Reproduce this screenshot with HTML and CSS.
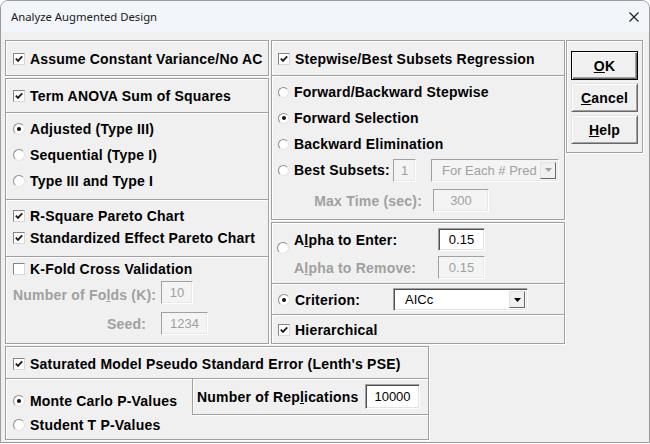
FILE: index.html
```html
<!DOCTYPE html>
<html lang="en">
<head>
    <meta charset="UTF-8">
    <title>Analyze Augmented Design</title>
    <link rel="stylesheet" href="styles.css">
</head>
<body>
    <div class="window">
        <div class="titlebar">
            <span class="title">Analyze Augmented Design</span>
            <svg class="close" width="10" height="10" viewBox="0 0 10 10">
                <path d="M0.5 0.5 L9.5 9.5 M9.5 0.5 L0.5 9.5" stroke="#1a1a1a" stroke-width="1.1" fill="none"/>
            </svg>
        </div>

        <div class="client">
            <div class="top">
                <!-- left column -->
                <div class="col-left">
                    <div class="panel p-assume">
                        <div class="row">
                            <span class="cb on"><svg viewBox="0 0 10 10"><path d="M1.8 4.6 L4 6.9 L8.2 2.4"/></svg></span>
                            <span class="lbl">Assume Constant Variance/No AC</span>
                        </div>
                    </div>

                    <div class="panel p-anova">
                        <div class="sec s-head">
                            <div class="row">
                                <span class="cb on"><svg viewBox="0 0 10 10"><path d="M1.8 4.6 L4 6.9 L8.2 2.4"/></svg></span>
                                <span class="lbl">Term ANOVA Sum of Squares</span>
                            </div>
                        </div>
                        <div class="sec s-types">
                            <div class="row r26"><span class="rb on"></span><span class="lbl">Adjusted (Type III)</span></div>
                            <div class="row r26"><span class="rb"></span><span class="lbl">Sequential (Type I)</span></div>
                            <div class="row r26"><span class="rb"></span><span class="lbl">Type III and Type I</span></div>
                        </div>
                        <div class="sec s-pareto">
                            <div class="row r22">
                                <span class="cb on"><svg viewBox="0 0 10 10"><path d="M1.8 4.6 L4 6.9 L8.2 2.4"/></svg></span>
                                <span class="lbl">R-Square Pareto Chart</span>
                            </div>
                            <div class="row r22">
                                <span class="cb on"><svg viewBox="0 0 10 10"><path d="M1.8 4.6 L4 6.9 L8.2 2.4"/></svg></span>
                                <span class="lbl">Standardized Effect Pareto Chart</span>
                            </div>
                        </div>
                        <div class="sec s-kfold">
                            <div class="row r22">
                                <span class="cb"></span>
                                <span class="lbl">K-Fold Cross Validation</span>
                            </div>
                            <div class="row r-folds">
                                <span class="lbl off lbl-folds">Number of Fo<u>l</u>ds (K):</span>
                                <span class="field off w-folds">10</span>
                            </div>
                            <div class="row r-seed">
                                <span class="lbl off lbl-seed">Seed:</span>
                                <span class="field off w-seed">1234</span>
                            </div>
                        </div>
                    </div>
                </div>

                <!-- middle column -->
                <div class="col-mid">
                    <div class="panel p-step">
                        <div class="sec s-stephead">
                            <div class="row">
                                <span class="cb on"><svg viewBox="0 0 10 10"><path d="M1.8 4.6 L4 6.9 L8.2 2.4"/></svg></span>
                                <span class="lbl">Stepwise/Best Subsets Regression</span>
                            </div>
                        </div>
                        <div class="sec s-method">
                            <div class="row r26"><span class="rb"></span><span class="lbl">Forward/Backward Stepwise</span></div>
                            <div class="row r26"><span class="rb on"></span><span class="lbl">Forward Selection</span></div>
                            <div class="row r26"><span class="rb"></span><span class="lbl">Backward Elimination</span></div>
                            <div class="row r26">
                                <span class="rb"></span><span class="lbl lbl-best">Best Subsets:</span>
                                <span class="field off w-best">1</span>
                                <span class="select off w-foreach">
                                    <span class="val">For Each # Pred</span>
                                    <span class="drop"><svg width="7" height="4" viewBox="0 0 7 4"><path d="M0 0 H7 L3.5 4 Z"/></svg></span>
                                </span>
                            </div>
                            <div class="row r-maxtime">
                                <span class="lbl off lbl-maxtime">Max Time (sec):</span>
                                <span class="field off w-maxtime">300</span>
                            </div>
                        </div>
                    </div>

                    <div class="panel p-alpha">
                        <div class="sec s-alpha">
                            <span class="rb rb-alpha"></span>
                            <div class="alpha-rows">
                                <div class="row r-alpha">
                                    <span class="lbl lbl-alpha">A<u>l</u>pha to Enter:</span>
                                    <span class="field w-alpha">0.15</span>
                                </div>
                                <div class="row r-alpha r-remove">
                                    <span class="lbl off lbl-alpha">A<u>l</u>pha to Remove:</span>
                                    <span class="field off w-alpha">0.15</span>
                                </div>
                            </div>
                        </div>
                        <div class="sec s-crit">
                            <div class="row">
                                <span class="rb on"></span><span class="lbl lbl-crit">Criterion:</span>
                                <span class="select w-crit">
                                    <span class="val">AICc</span>
                                    <span class="drop"><svg width="7" height="4" viewBox="0 0 7 4"><path d="M0 0 H7 L3.5 4 Z"/></svg></span>
                                </span>
                            </div>
                        </div>
                        <div class="sec s-hier">
                            <div class="row">
                                <span class="cb on"><svg viewBox="0 0 10 10"><path d="M1.8 4.6 L4 6.9 L8.2 2.4"/></svg></span>
                                <span class="lbl">Hierarchical</span>
                            </div>
                        </div>
                    </div>
                </div>

                <!-- buttons -->
                <div class="panel p-buttons">
                    <div class="btn default"><u>O</u>K</div>
                    <div class="btn"><u>C</u>ancel</div>
                    <div class="btn"><u>H</u>elp</div>
                </div>
            </div>

            <div class="panel p-pse">
                <div class="sec s-psehead">
                    <div class="row">
                        <span class="cb on"><svg viewBox="0 0 10 10"><path d="M1.8 4.6 L4 6.9 L8.2 2.4"/></svg></span>
                        <span class="lbl">Saturated Model Pseudo Standard Error (Lenth's PSE)</span>
                    </div>
                </div>
                <div class="sec s-pvalues">
                    <div class="pv-radios">
                        <div class="row r24"><span class="rb on"></span><span class="lbl">Monte Carlo P-Values</span></div>
                        <div class="row r24"><span class="rb"></span><span class="lbl">Student T P-Values</span></div>
                    </div>
                    <div class="reps">
                        <span class="lbl">Number of Rep<u>l</u>ications</span>
                        <span class="field w-reps">10000</span>
                    </div>
                </div>
            </div>
        </div>
    </div>
</body>
</html>
```

FILE: styles.css
```css
* {
    box-sizing: border-box;
}

body {
    margin: 0;
    background: #ffffff;
    font-family: "Liberation Sans", Arial, sans-serif;
}

.window {
    width: 650px;
    height: 443px;
    border: 1px solid #9c9c9c;
    border-radius: 8px 8px 0 0;
    background: #f0f0f0;
    overflow: hidden;
}

.titlebar {
    height: 31px;
    background: #f2f5f9;
    display: flex;
    align-items: center;
    justify-content: space-between;
    padding: 0 10px 0 10px;
}

.title {
    font-family: "Noto Sans", "Open Sans", sans-serif;
    font-size: 11.3px;
    color: #1a1a1a;
}

.client {
    padding: 8px 0 0 4px;
}

.top {
    display: flex;
    align-items: flex-start;
}

.col-left {
    width: 264px;
    display: flex;
    flex-direction: column;
    gap: 2px;
}

.col-mid {
    width: 294px;
    margin-left: 2px;
    display: flex;
    flex-direction: column;
    gap: 2px;
}

/* etched group frames */
.panel {
    border: 1px solid #a0a0a0;
    box-shadow: inset 1px 1px 0 #fff, 1px 1px 0 #fff;
}

.sec + .sec {
    border-top: 1px solid #a0a0a0;
    box-shadow: inset 0 1px 0 #fff;
}

.row {
    display: flex;
    align-items: center;
}

.r22 { height: 22px; }
.r24 { height: 24px; }
.r26 { height: 26px; }

.lbl {
    font-size: 14px;
    font-weight: bold;
    color: #000;
    white-space: nowrap;
    letter-spacing: 0.2px;
}

.lbl.off {
    color: #a0a0a0;
}

/* checkbox */
.cb {
    width: 12px;
    height: 12px;
    flex: none;
    margin-right: 5px;
    background: #fff;
    border: 1px solid;
    border-color: #858585 #d8d8d8 #d8d8d8 #858585;
    display: flex;
    align-items: center;
    justify-content: center;
}

.cb svg {
    width: 10px;
    height: 10px;
}

.cb path {
    fill: none;
    stroke: #1e1e1e;
    stroke-width: 1.9;
}

/* radio */
.rb {
    width: 12px;
    height: 12px;
    flex: none;
    margin-right: 5px;
    border-radius: 50%;
    background: #fff;
    border: 1px solid;
    border-color: #8c8c8c #e4e4e4 #e4e4e4 #8c8c8c;
    position: relative;
}

.rb.on::after {
    content: "";
    position: absolute;
    left: 3px;
    top: 3px;
    width: 4px;
    height: 4px;
    border-radius: 50%;
    background: #111;
}

/* edit fields */
.field {
    height: 23px;
    flex: none;
    display: flex;
    align-items: center;
    justify-content: center;
    font-size: 13px;
    color: #000;
    background: #fff;
    border: 1px solid;
    border-color: #a0a0a0 #fff #fff #a0a0a0;
    box-shadow: inset 1px 1px 0 #505050, inset -1px -1px 0 #e3e3e3;
}

.field.off {
    color: #a0a0a0;
    background: #f4f4f4;
    box-shadow: inset -1px -1px 0 #e8e8e8;
}

/* combo boxes */
.select {
    height: 23px;
    flex: none;
    display: flex;
    align-items: center;
    font-size: 13px;
    color: #000;
    background: #fff;
    border: 1px solid;
    border-color: #a0a0a0 #fff #fff #a0a0a0;
    box-shadow: inset 1px 1px 0 #505050, inset -1px -1px 0 #e3e3e3;
    padding: 2px 2px 2px 0;
}

.select .val {
    flex: 1;
    white-space: nowrap;
}

.select .drop {
    width: 16px;
    height: 100%;
    display: flex;
    align-items: center;
    justify-content: center;
    background: #f0f0f0;
    border: 1px solid;
    border-color: #e3e3e3 #696969 #696969 #e3e3e3;
}

.select .drop path {
    fill: #000;
}

.select.off {
    color: #a0a0a0;
    background: #f4f4f4;
    box-shadow: inset -1px -1px 0 #e8e8e8;
}

.select.off .drop path {
    fill: #a0a0a0;
}

/* left column */
.p-assume {
    height: 36px;
    padding: 1px 0 0 7px;
}

.p-assume .row {
    height: 34px;
}

.p-anova {
    height: 266px;
}

.p-anova .sec {
    padding-left: 7px;
}

.s-head {
    height: 33px;
    display: flex;
    align-items: center;
}

.s-types {
    height: 87px;
    padding-top: 3px;
}

.s-pareto {
    height: 57px;
    padding-top: 5px;
}

.s-kfold {
    height: 87px;
    padding-top: 1px;
}

.r-folds {
    height: 23px;
    margin-top: 1px;
}

.r-seed {
    height: 23px;
    margin-top: 8px;
}

.lbl-folds {
    width: 140px;
    text-align: right;
    margin-right: 8px;
    padding-top: 4px;
}

.lbl-seed {
    width: 133px;
    text-align: right;
    margin-right: 15px;
}

.w-folds { width: 32px; }
.w-seed { width: 47px; }

/* middle column */
.p-step {
    height: 180px;
}

.p-step .sec,
.p-alpha .sec {
    padding-left: 6px;
}

.s-stephead {
    height: 34px;
    display: flex;
    align-items: center;
    padding-top: 1px;
}

.s-method {
    height: 144px;
    padding-top: 3px;
}

.s-method .rb {
    width: 11px;
    height: 11px;
}

.s-method .rb.on::after {
    left: 2.5px;
    top: 2.5px;
}

.lbl-best {
    width: 99px;
}

.w-best {
    width: 23px;
    margin-right: 15px;
}

.w-foreach {
    width: 128px;
    padding-left: 10px;
}

.r-maxtime {
    height: 23px;
    margin-top: 6px;
}

.lbl-maxtime {
    width: 144px;
    text-align: right;
    margin-right: 11px;
}

.w-maxtime {
    width: 56px;
}

.p-alpha {
    height: 122px;
}

.s-alpha {
    height: 60px;
    display: flex;
    align-items: flex-start;
}

.rb-alpha {
    margin-top: 19px;
    margin-left: -1px;
    margin-right: 5px;
}

.alpha-rows {
    padding-top: 5px;
}

.r-alpha {
    height: 23px;
}

.r-remove {
    margin-top: 5px;
}

.lbl-alpha {
    width: 144px;
}

.w-alpha {
    width: 47px;
}

.s-crit {
    height: 31px;
    display: flex;
    align-items: center;
    padding-top: 1px;
}

.lbl-crit {
    width: 98px;
}

.w-crit {
    width: 135px;
    padding-left: 11px;
}

.s-hier {
    height: 29px;
    display: flex;
    align-items: center;
    padding-top: 2px;
}

/* buttons */
.p-buttons {
    width: 77px;
    height: 113px;
    margin-left: 1px;
    padding: 10px 0 0 4px;
    display: flex;
    flex-direction: column;
    gap: 3px;
}

.btn {
    width: 67px;
    height: 29px;
    display: flex;
    align-items: center;
    justify-content: center;
    font-size: 14px;
    font-weight: bold;
    letter-spacing: 0.2px;
    background: #f0f0f0;
    border: 1px solid;
    border-color: #e3e3e3 #696969 #696969 #e3e3e3;
    box-shadow: inset 1px 1px 0 #fff, inset -1px -1px 0 #a0a0a0;
}

.btn.default {
    border-color: #000;
    box-shadow: inset 1px 1px 0 #fff, inset -1px -1px 0 #696969, inset -2px -2px 0 #a0a0a0;
}

/* bottom group */
.p-pse {
    width: 424px;
    height: 94px;
    margin-top: 2px;
}

.s-psehead {
    height: 31px;
    display: flex;
    align-items: center;
    padding: 3px 0 0 7px;
}

.s-pvalues {
    height: 61px;
    display: flex;
    align-items: flex-start;
}

.pv-radios {
    width: 186px;
    padding: 10px 0 0 7px;
}

.reps {
    width: 236px;
    height: 36px;
    display: flex;
    align-items: center;
    padding: 0 8px 0 4px;
    border-left: 1px solid #a0a0a0;
    border-bottom: 1px solid #a0a0a0;
    box-shadow: inset 1px 0 0 #fff, 0 1px 0 #fff;
}

.reps .lbl {
    flex: 1;
}

.w-reps {
    width: 55px;
    height: 25px;
}
```
